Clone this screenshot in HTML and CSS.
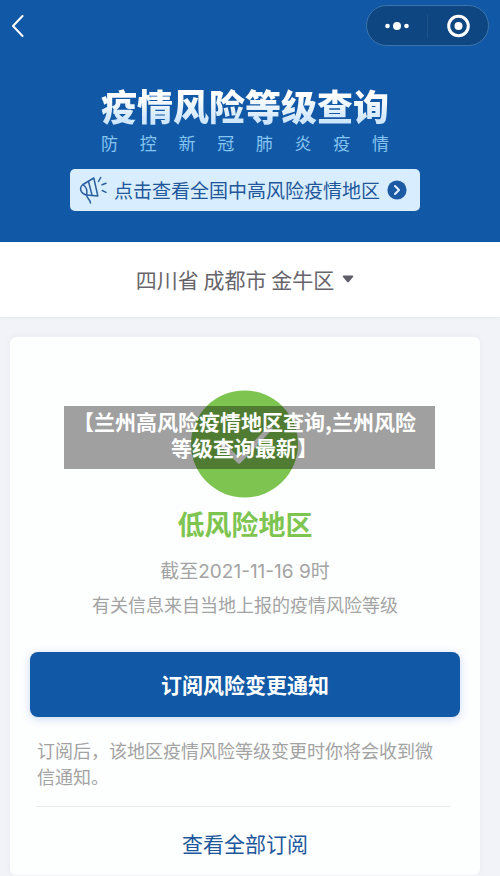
FILE: index.html
```html
<!DOCTYPE html>
<html lang="zh-CN">
<head>
    <meta charset="UTF-8">
    <meta name="viewport" content="width=device-width, initial-scale=1.0">
    <title>疫情风险等级查询</title>
    <link rel="stylesheet" href="styles.css">
</head>
<body>
    <header class="header">
        <div class="navbar">
            <a class="back" href="#" aria-label="返回">
                <svg width="13" height="22" viewBox="0 0 13 22" fill="none" stroke="#fff" stroke-width="2" stroke-linecap="round" stroke-linejoin="round">
                    <path d="M11.5 1 L2 11 L11.5 21"/>
                </svg>
            </a>
            <div class="capsule">
                <button class="capsule-button" type="button" aria-label="更多">
                    <svg width="24" height="24" viewBox="0 0 24 24" fill="#fff">
                        <circle cx="2.5" cy="12" r="2.3"/>
                        <circle cx="12" cy="12" r="4"/>
                        <circle cx="21.5" cy="12" r="2.3"/>
                    </svg>
                </button>
                <button class="capsule-button" type="button" aria-label="关闭">
                    <svg width="24" height="24" viewBox="0 0 24 24">
                        <circle cx="12.5" cy="12" r="9.8" fill="none" stroke="#fff" stroke-width="3"/>
                        <circle cx="12.5" cy="12" r="4" fill="#fff"/>
                    </svg>
                </button>
            </div>
        </div>
        <div class="hero">
            <div class="hero-text">
                <h1 class="title">疫情风险等级查询</h1>
                <p class="subtitle">防控新冠肺炎疫情</p>
            </div>
            <a class="banner" href="#">
                <svg width="28" height="28" viewBox="0 0 28 28" fill="none" stroke="#2b5f9e" stroke-width="1.5" stroke-linecap="round" stroke-linejoin="round">
                    <path d="M4 8.5 L14.8 2 L18.8 20 L7.5 19"/>
                    <path d="M4 8.5 C0 11.5 1 17.5 7.5 19 C8.5 15 7.5 11 4 8.5 Z"/>
                    <path d="M7.5 19 C8 22.5 11 23 11.5 27"/>
                    <path d="M9.5 5.5 L13 19"/>
                    <path d="M19.5 5.5 L21.7 1.5"/>
                    <path d="M23 8.8 L27 7.3"/>
                    <path d="M23.3 14.5 L27 16.3"/>
                </svg>
                <span>点击查看全国中高风险疫情地区</span>
                <svg class="banner-arrow" width="20" height="20" viewBox="0 0 20 20" fill="none">
                    <circle cx="10" cy="10" r="9.6" fill="#1c5ba3"/>
                    <path d="M8 6 L12 10 L8 14" stroke="#e4f2ff" stroke-width="2" stroke-linecap="round" stroke-linejoin="round"/>
                </svg>
            </a>
        </div>
    </header>

    <button class="location" type="button">
        <span>四川省 成都市 金牛区</span>
        <svg width="12" height="8" viewBox="0 0 12 8" fill="#5f5d68">
            <path d="M1.5 0.5 H10.5 Q12 0.8 11 2 L7 6.8 Q6 7.8 5 6.8 L1 2 Q0 0.8 1.5 0.5 Z"/>
        </svg>
    </button>

    <main class="main">
        <section class="card">
            <div class="status">
                <svg width="108" height="108" viewBox="0 0 108 108" fill="none">
                    <circle cx="53.5" cy="54" r="53.5" fill="#7dc550"/>
                    <path d="M32 55 L48 71 L79 38" stroke="#fff" stroke-width="5" stroke-linecap="round" stroke-linejoin="round"/>
                </svg>
                <p class="caption">【兰州高风险疫情地区查询,兰州风险等级查询最新】</p>
            </div>
            <h2 class="level">低风险地区</h2>
            <p class="info date">截至2021-11-16 9时</p>
            <p class="info">有关信息来自当地上报的疫情风险等级</p>
            <button class="subscribe" type="button">订阅风险变更通知</button>
            <p class="note">订阅后，该地区疫情风险等级变更时你将会收到微信通知。</p>
            <a class="all" href="#">查看全部订阅</a>
        </section>
    </main>
</body>
</html>
```

FILE: styles.css
```css
* {
    box-sizing: border-box;
}
body {
    font-family: "Noto Sans CJK SC", sans-serif;
    margin: 0;
    background-color: #f1f3f8;
}
h1, h2, p {
    margin: 0;
}
a {
    text-decoration: none;
}
button {
    font-family: inherit;
    border: none;
    cursor: pointer;
}
svg {
    display: block;
    flex-shrink: 0;
}

.header {
    background-color: #1159a6;
    padding: 5px 11px 31px;
}
.navbar {
    display: flex;
    align-items: center;
    justify-content: space-between;
}
.capsule {
    display: flex;
    align-items: center;
    width: 123px;
    height: 41px;
    background-color: #0e4681;
    border: 1px solid #3d74ac;
    border-radius: 21px;
}
.capsule-button {
    flex: 1;
    display: flex;
    justify-content: center;
    padding: 0;
    background: none;
}
.capsule-button + .capsule-button {
    border-left: 1px solid #1d5289;
}
.hero {
    display: flex;
    flex-direction: column;
    align-items: center;
    padding: 37px 10px 0 0;
}
.title {
    font-size: 36px;
    line-height: 44px;
    font-weight: 900;
    color: transparent;
    background: linear-gradient(#fff 30%, #cfe6ff 85%);
    background-clip: text;
    -webkit-background-clip: text;
}
.subtitle {
    font-size: 17px;
    line-height: 24px;
    margin-top: 4px;
    color: #86c4f2;
    text-align-last: justify;
    text-justify: inter-character;
}
.banner {
    display: flex;
    align-items: center;
    margin-top: 14px;
    height: 42px;
    padding: 0 13px 0 9px;
    border-radius: 5px;
    background-color: #d8edfe;
    color: #1f579a;
    font-size: 19px;
    line-height: 28px;
}
.banner span {
    margin: 0 7px;
}

.location {
    display: flex;
    align-items: center;
    justify-content: center;
    gap: 8px;
    width: 100%;
    height: 75px;
    padding: 0 10px 2px 0;
    background-color: #fff;
    color: #67656b;
    font-size: 21px;
    box-shadow: 0 1px 3px rgba(0, 0, 0, 0.05);
}

.main {
    padding: 20px 20px 0 10px;
}
.card {
    display: flex;
    flex-direction: column;
    background-color: #fdfefe;
    border-radius: 6px;
    padding: 53px 20px 16px;
    text-align: center;
    box-shadow: 0 0 6px rgba(60, 80, 120, 0.06);
}
.status {
    position: relative;
    display: flex;
    justify-content: center;
}
/* dark strip laid over the status icon */
.caption {
    position: absolute;
    top: 16px;
    left: 34px;
    right: 25px;
    padding: 2px 10px 9px 0;
    background-color: rgba(0, 0, 0, 0.37);
    color: #fff;
    font-size: 21px;
    line-height: 26px;
    font-weight: 700;
}
.level {
    margin-top: 8px;
    color: #7dc550;
    font-size: 27px;
    line-height: 36px;
    font-weight: 700;
}
.info {
    color: #a3a3a3;
    font-size: 18px;
    line-height: 32px;
}
.date {
    margin-top: 14px;
    font-family: Inter, "Noto Sans CJK SC", sans-serif;
    font-size: 19px;
}
.subscribe {
    margin-top: 32px;
    height: 65px;
    padding: 0 0 2px;
    border-radius: 8px;
    background-color: #1159a6;
    color: #fff;
    font-size: 21px;
    font-weight: 700;
    box-shadow: 0 2px 8px rgba(50, 110, 230, 0.25);
}
.note {
    margin: 20px 18px 17px 7px;
    color: #a3a3a3;
    font-size: 18px;
    line-height: 26px;
    text-align: left;
}
.all {
    margin: 0 10px 0 6px;
    padding: 20px 0 0 4px;
    border-top: 1px solid #e9eaee;
    color: #1c579b;
    font-size: 21px;
    line-height: 32px;
}
```
